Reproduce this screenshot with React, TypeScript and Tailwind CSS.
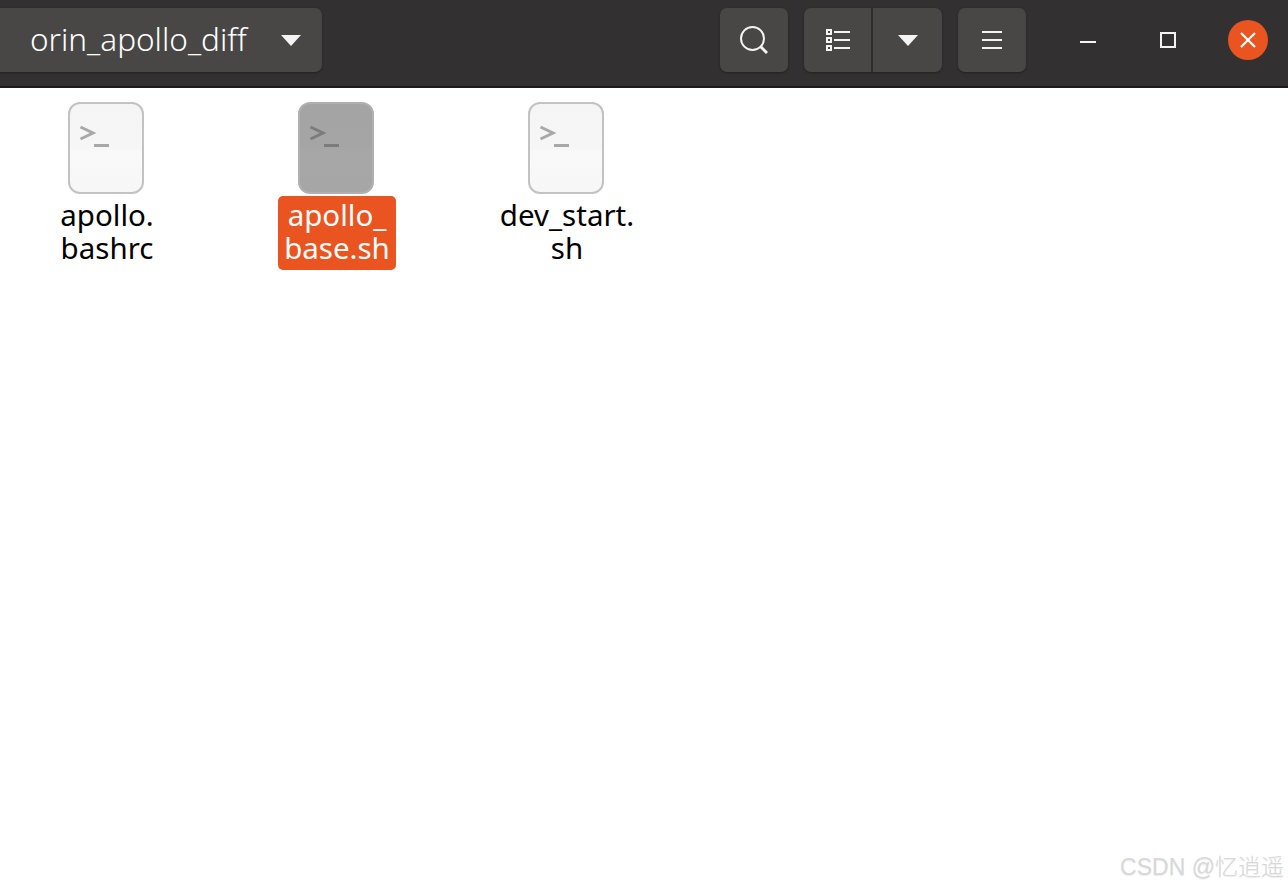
const uiFont = "font-['Noto_Sans','Open_Sans',sans-serif]"

function FileIcon({ selected }: { selected?: boolean }) {
  const id = selected ? 'sel' : 'norm'
  return (
    <svg width="76" height="92" viewBox="0 0 76 92" className="shrink-0">
      <defs>
        <linearGradient id={id} x1="0" y1="0" x2="0" y2="1">
          <stop offset="0" stopColor={selected ? '#a4a4a4' : '#f5f5f5'} />
          <stop offset="0.5" stopColor={selected ? '#a5a5a5' : '#f6f6f6'} />
          <stop offset="0.54" stopColor={selected ? '#a7a7a7' : '#f9f9f9'} />
          <stop offset="1" stopColor={selected ? '#a6a6a6' : '#f7f7f7'} />
        </linearGradient>
      </defs>
      <rect x="1" y="1" width="74" height="90" rx="11" fill={`url(#${id})`} stroke={selected ? '#b0b0b0' : '#c2c2c2'} strokeWidth="2" />
      <path d="M12.5 25 L25 31 L12.5 37" fill="none" stroke={selected ? '#7c7c7c' : '#a8a8a8'} strokeWidth="3" />
      <rect x="26" y="42" width="15" height="3" fill={selected ? '#7c7c7c' : '#a8a8a8'} />
    </svg>
  )
}

function Item({ lines, selected }: { lines: string[]; selected?: boolean }) {
  return (
    <div className="w-[184px] flex flex-col items-center">
      <div className="-ml-[2px]">
        <FileIcon selected={selected} />
      </div>
      <div
        className={`mt-[2px] h-[74px] rounded-[5px] px-[6.5px] pt-[2px] text-center text-[29.5px] leading-[33px] whitespace-nowrap ${uiFont} ${
          selected ? 'bg-[#e95420] text-white' : 'text-black'
        }`}
      >
        {lines[0]}
        <br />
        {lines[1]}
      </div>
    </div>
  )
}

export default function App() {
  return (
    <div className="relative h-[888px] w-[1288px] overflow-hidden bg-white">
      <header className="flex h-[88px] items-center border-b-2 border-[#1c1b1b] bg-[#323030] pb-[6px]">
        <button className={`flex h-[64px] w-[322px] items-center rounded-r-[7px] bg-[#484746] pl-[30px] text-white shadow-[0_1px_2px_#222] ${uiFont}`}>
          <span className="-mt-[2px] w-[251px] text-left text-[31.5px] leading-none font-light">orin_apollo_diff</span>
          <svg width="20" height="11" viewBox="0 0 20 11">
            <path d="M0 0 H20 L10 11 Z" fill="#f4f4f4" />
          </svg>
        </button>

        <div className="flex-1" />

        <button className="flex h-[64px] w-[68px] items-center justify-center rounded-[7px] bg-[#484746] shadow-[0_1px_2px_#222]">
          <svg width="28" height="28" viewBox="0 0 28 28" fill="none" stroke="#f4f4f4" strokeWidth="2">
            <circle cx="12.5" cy="12.5" r="11.5" />
            <path d="M20.5 20.5 L27 27" strokeWidth="3" />
          </svg>
        </button>

        <div className="ml-[16px] flex h-[64px] w-[138px] rounded-[7px] bg-[#484746] shadow-[0_1px_2px_#222]">
          <button className="flex w-[69px] items-center justify-center border-r-2 border-[#2e2d2d]">
            <svg width="24" height="22" viewBox="0 0 24 22" fill="none" stroke="#f4f4f4" strokeWidth="2">
              <rect x="1" y="1" width="4" height="4" />
              <rect x="1" y="9" width="4" height="4" />
              <rect x="1" y="17" width="4" height="4" />
              <path d="M8 3 H24 M8 11 H24 M8 19 H24" />
            </svg>
          </button>
          <button className="flex flex-1 items-center justify-center">
            <svg width="20" height="11" viewBox="0 0 20 11">
              <path d="M0 0 H20 L10 11 Z" fill="#f4f4f4" />
            </svg>
          </button>
        </div>

        <button className="ml-[16px] flex h-[64px] w-[68px] items-center justify-center rounded-[7px] bg-[#484746] shadow-[0_1px_2px_#222]">
          <svg width="20" height="20" viewBox="0 0 20 20" stroke="#f4f4f4" strokeWidth="2">
            <path d="M0 2 H20 M0 10 H20 M0 18 H20" />
          </svg>
        </button>

        <div className="ml-[22px] flex">
          <button className="flex h-[40px] w-[80px] items-center justify-center">
            <svg width="16" height="16" viewBox="0 0 16 16" className="mt-[10px]">
              <rect x="0" y="4" width="16" height="2" fill="#f4f4f4" />
            </svg>
          </button>
          <button className="flex h-[40px] w-[80px] items-center justify-center">
            <svg width="16" height="16" viewBox="0 0 16 16" fill="none" stroke="#f4f4f4" strokeWidth="2">
              <rect x="1" y="1" width="14" height="14" />
            </svg>
          </button>
          <div className="flex w-[80px] justify-center">
            <button className="flex h-[40px] w-[40px] items-center justify-center rounded-full bg-[#e95420]">
              <svg width="16" height="16" viewBox="0 0 16 16" stroke="#ffffff" strokeWidth="2.2">
                <path d="M1 1 L15 15 M15 1 L1 15" />
              </svg>
            </button>
          </div>
        </div>
      </header>

      <main className="flex gap-[46px] pl-[15px] pt-[14px]">
        <Item lines={['apollo.', 'bashrc']} />
        <Item lines={['apollo_', 'base.sh']} selected />
        <Item lines={['dev_start.', 'sh']} />
      </main>

      <div className="absolute bottom-[7px] right-[4px] font-['Liberation_Sans','Noto_Sans_CJK_SC',sans-serif] text-[23px] leading-[28px] font-light text-[#d8d8d8] [text-shadow:0_1px_1px_#ececec]">
        CSDN @忆逍遥
      </div>
    </div>
  )
}
